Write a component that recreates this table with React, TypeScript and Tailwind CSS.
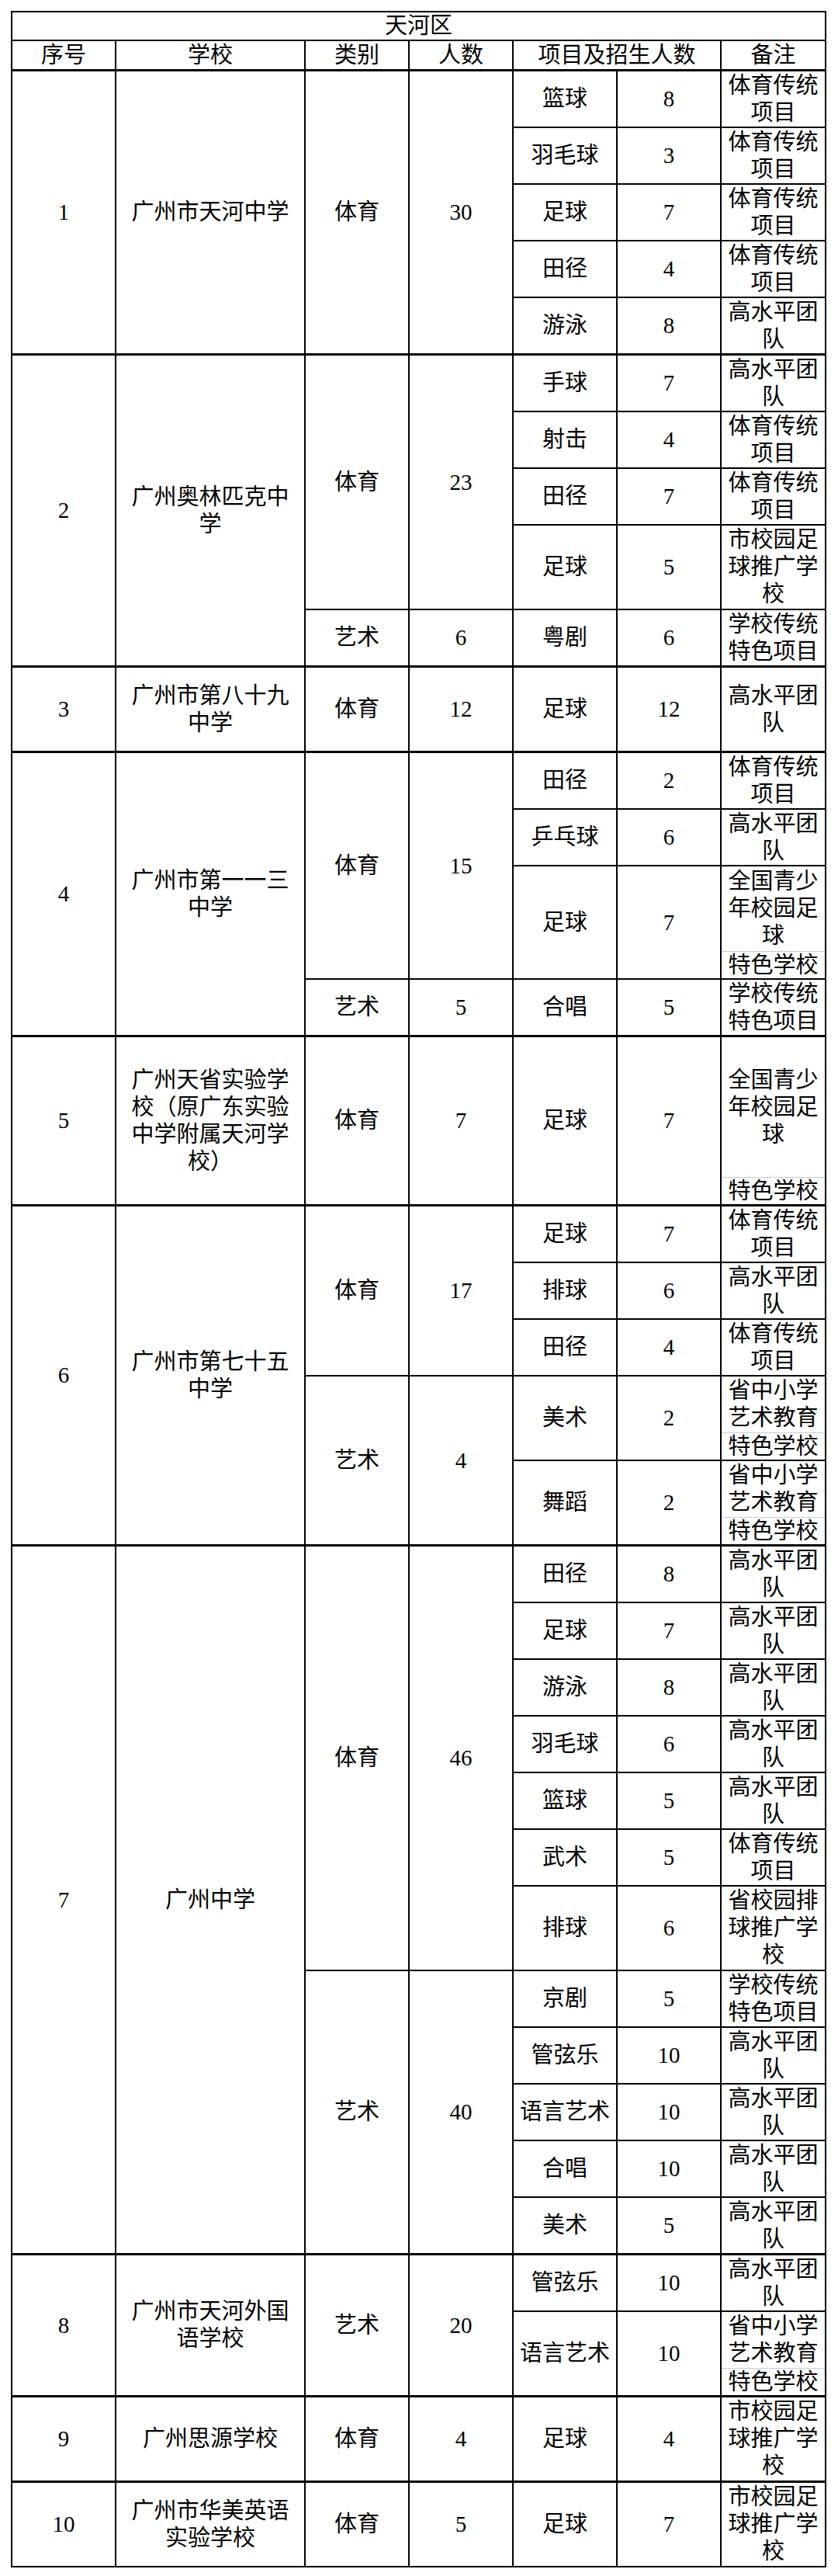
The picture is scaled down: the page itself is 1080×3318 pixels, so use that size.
import React from 'react';

type Remark = { lines: string[]; bottom?: string };
type Item = { name: string; n: string; remark: Remark; size: 2 | 3 | 4 | 6 };
type Group = { cat: string; total: string; items: Item[] };
type School = { no: string; name: string[]; groups: Group[] };

const TY: Remark = { lines: ['体育传统', '项目'] };
const GS: Remark = { lines: ['高水平团', '队'] };
const SX: Remark = { lines: ['市校园足', '球推广学', '校'] };
const XX: Remark = { lines: ['学校传统', '特色项目'] };
const QG: Remark = { lines: ['全国青少', '年校园足', '球'], bottom: '特色学校' };
const SZ: Remark = { lines: ['省中小学', '艺术教育'], bottom: '特色学校' };
const SP: Remark = { lines: ['省校园排', '球推广学', '校'] };

const schools: School[] = [
  {
    no: '1',
    name: ['广州市天河中学'],
    groups: [
      {
        cat: '体育',
        total: '30',
        items: [
          { name: '篮球', n: '8', remark: TY, size: 2 },
          { name: '羽毛球', n: '3', remark: TY, size: 2 },
          { name: '足球', n: '7', remark: TY, size: 2 },
          { name: '田径', n: '4', remark: TY, size: 2 },
          { name: '游泳', n: '8', remark: GS, size: 2 },
        ],
      },
    ],
  },
  {
    no: '2',
    name: ['广州奥林匹克中', '学'],
    groups: [
      {
        cat: '体育',
        total: '23',
        items: [
          { name: '手球', n: '7', remark: GS, size: 2 },
          { name: '射击', n: '4', remark: TY, size: 2 },
          { name: '田径', n: '7', remark: TY, size: 2 },
          { name: '足球', n: '5', remark: SX, size: 3 },
        ],
      },
      { cat: '艺术', total: '6', items: [{ name: '粤剧', n: '6', remark: XX, size: 2 }] },
    ],
  },
  {
    no: '3',
    name: ['广州市第八十九', '中学'],
    groups: [{ cat: '体育', total: '12', items: [{ name: '足球', n: '12', remark: GS, size: 3 }] }],
  },
  {
    no: '4',
    name: ['广州市第一一三', '中学'],
    groups: [
      {
        cat: '体育',
        total: '15',
        items: [
          { name: '田径', n: '2', remark: TY, size: 2 },
          { name: '乒乓球', n: '6', remark: GS, size: 2 },
          { name: '足球', n: '7', remark: QG, size: 4 },
        ],
      },
      { cat: '艺术', total: '5', items: [{ name: '合唱', n: '5', remark: XX, size: 2 }] },
    ],
  },
  {
    no: '5',
    name: ['广州天省实验学', '校（原广东实验', '中学附属天河学', '校）'],
    groups: [{ cat: '体育', total: '7', items: [{ name: '足球', n: '7', remark: QG, size: 6 }] }],
  },
  {
    no: '6',
    name: ['广州市第七十五', '中学'],
    groups: [
      {
        cat: '体育',
        total: '17',
        items: [
          { name: '足球', n: '7', remark: TY, size: 2 },
          { name: '排球', n: '6', remark: GS, size: 2 },
          { name: '田径', n: '4', remark: TY, size: 2 },
        ],
      },
      {
        cat: '艺术',
        total: '4',
        items: [
          { name: '美术', n: '2', remark: SZ, size: 3 },
          { name: '舞蹈', n: '2', remark: SZ, size: 3 },
        ],
      },
    ],
  },
  {
    no: '7',
    name: ['广州中学'],
    groups: [
      {
        cat: '体育',
        total: '46',
        items: [
          { name: '田径', n: '8', remark: GS, size: 2 },
          { name: '足球', n: '7', remark: GS, size: 2 },
          { name: '游泳', n: '8', remark: GS, size: 2 },
          { name: '羽毛球', n: '6', remark: GS, size: 2 },
          { name: '篮球', n: '5', remark: GS, size: 2 },
          { name: '武术', n: '5', remark: TY, size: 2 },
          { name: '排球', n: '6', remark: SP, size: 3 },
        ],
      },
      {
        cat: '艺术',
        total: '40',
        items: [
          { name: '京剧', n: '5', remark: XX, size: 2 },
          { name: '管弦乐', n: '10', remark: GS, size: 2 },
          { name: '语言艺术', n: '10', remark: GS, size: 2 },
          { name: '合唱', n: '10', remark: GS, size: 2 },
          { name: '美术', n: '5', remark: GS, size: 2 },
        ],
      },
    ],
  },
  {
    no: '8',
    name: ['广州市天河外国', '语学校'],
    groups: [
      {
        cat: '艺术',
        total: '20',
        items: [
          { name: '管弦乐', n: '10', remark: GS, size: 2 },
          { name: '语言艺术', n: '10', remark: SZ, size: 3 },
        ],
      },
    ],
  },
  {
    no: '9',
    name: ['广州思源学校'],
    groups: [{ cat: '体育', total: '4', items: [{ name: '足球', n: '4', remark: SX, size: 3 }] }],
  },
  {
    no: '10',
    name: ['广州市华美英语', '实验学校'],
    groups: [{ cat: '体育', total: '5', items: [{ name: '足球', n: '7', remark: SX, size: 3 }] }],
  },
];

// content heights for the remark cell, per number of text lines in the row
const cellH: Record<number, string> = {
  2: 'h-[71px]',
  3: 'h-[107px]',
  4: 'h-[144px]',
  6: 'h-[215px]',
};
const topH: Record<number, string> = {
  3: 'h-[72px]',
  4: 'h-[109px]',
  6: 'h-[180px]',
};

const td = 'border-2 border-black p-0 text-center align-middle';

function RemarkCell({ remark, size }: { remark: Remark; size: number }) {
  if (remark.bottom) {
    return (
      <td className={td}>
        <div className={`flex flex-col ${cellH[size]}`}>
          <div className={`flex flex-col items-center justify-center ${topH[size]}`}>
            {remark.lines.map((l, i) => (
              <span key={i}>{l}</span>
            ))}
          </div>
          <div className="flex h-[35px] items-center justify-center border-t border-[#c3cbdc]">
            {remark.bottom}
          </div>
        </div>
      </td>
    );
  }
  return (
    <td className={td}>
      <div className={`flex flex-col items-center justify-center ${cellH[size]}`}>
        {remark.lines.map((l, i) => (
          <span key={i}>{l}</span>
        ))}
      </div>
    </td>
  );
}

export default function App() {
  return (
    <div className="min-h-[3318px] bg-white pt-[14px] pl-[14px] text-black">
      <table className="w-[1049px] table-fixed border-collapse border-2 border-black font-['Liberation_Serif','Noto_Sans_CJK_SC',serif] text-[29px] leading-[35px]">
        <colgroup>
          <col className="w-[134px]" />
          <col className="w-[244px]" />
          <col className="w-[134px]" />
          <col className="w-[134px]" />
          <col className="w-[134px]" />
          <col className="w-[134px]" />
          <col className="w-[135px]" />
        </colgroup>
        <tbody>
          <tr>
            <td colSpan={7} className={td}>
              <div className="flex h-[35px] items-center justify-center">天河区</div>
            </td>
          </tr>
          <tr className="border-b-[3px] border-black">
            {['序号', '学校', '类别', '人数'].map((h) => (
              <td key={h} className={td}>
                <div className="flex h-[36px] items-center justify-center">{h}</div>
              </td>
            ))}
            <td colSpan={2} className={td}>
              <div className="flex h-[36px] items-center justify-center">项目及招生人数</div>
            </td>
            <td className={td}>
              <div className="flex h-[36px] items-center justify-center">备注</div>
            </td>
          </tr>
          {schools.map((s) => {
            const count = s.groups.reduce((a, g) => a + g.items.length, 0);
            return s.groups.map((g, gi) =>
              g.items.map((it, ii) => (
                <tr
                  key={`${s.no}-${gi}-${ii}`}
                  className={gi === 0 && ii === 0 ? 'border-t-[3px] border-black' : ''}
                >
                  {gi === 0 && ii === 0 && (
                    <>
                      <td rowSpan={count} className={td}>
                        {s.no}
                      </td>
                      <td rowSpan={count} className={td}>
                        {s.name.map((l, i) => (
                          <div key={i}>{l}</div>
                        ))}
                      </td>
                    </>
                  )}
                  {ii === 0 && (
                    <>
                      <td rowSpan={g.items.length} className={td}>
                        {g.cat}
                      </td>
                      <td rowSpan={g.items.length} className={td}>
                        {g.total}
                      </td>
                    </>
                  )}
                  <td className={`${td} whitespace-nowrap`}>{it.name}</td>
                  <td className={td}>{it.n}</td>
                  <RemarkCell remark={it.remark} size={it.size} />
                </tr>
              ))
            );
          })}
        </tbody>
      </table>
    </div>
  );
}
